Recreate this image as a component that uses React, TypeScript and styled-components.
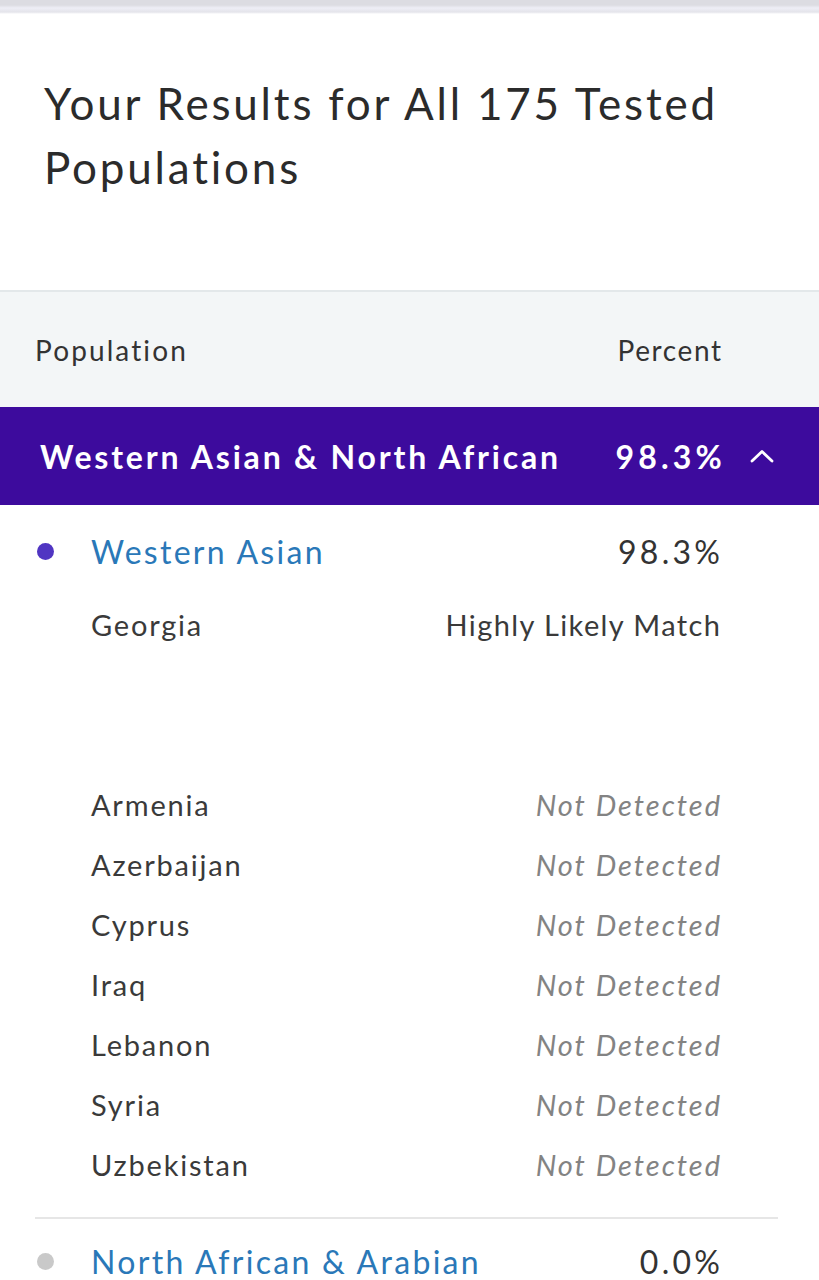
import React from 'react';
import styled, { createGlobalStyle } from 'styled-components';

const GlobalStyle = createGlobalStyle`
  html, body {
    margin: 0;
    padding: 0;
    background: #fff;
    font-family: Lato, "Noto Sans", "Liberation Sans", sans-serif;
    color: #333;
  }
`;

type Country = {
  name: string,
  status: string
}

const countries: Country[] = [
  { name: 'Armenia', status: 'Not Detected' },
  { name: 'Azerbaijan', status: 'Not Detected' },
  { name: 'Cyprus', status: 'Not Detected' },
  { name: 'Iraq', status: 'Not Detected' },
  { name: 'Lebanon', status: 'Not Detected' },
  { name: 'Syria', status: 'Not Detected' },
  { name: 'Uzbekistan', status: 'Not Detected' },
];

const Page = styled.div`
  width: 819px;
  min-height: 1280px;
  overflow: hidden;
`;

const TopStrip = styled.div`
  height: 14px;
  background: linear-gradient(#dcdce2 0, #dcdce2 5px, #eeeef6 8px, #e4e4ea 12px, #fff 14px);
`;

const Title = styled.h1`
  margin: 0;
  padding: 57px 60px 0 44px;
  font-size: 44px;
  font-weight: 400;
  line-height: 64px;
  letter-spacing: 2.8px;
  color: #2b2b2b;
`;

const TableHead = styled.div`
  margin-top: 91px;
  height: 115px;
  display: flex;
  align-items: center;
  justify-content: space-between;
  padding: 0 98px 0 35px;
  background: #f3f6f7;
  border-top: 2px solid #e3e8ea;
  font-size: 28px;
  color: #333;
`;

const HeadLabel = styled.span<{ spacing: number, right?: boolean }>`
  letter-spacing: ${({ spacing }) => spacing}px;
  margin-right: ${({ spacing, right }) => right ? -spacing : 0}px;
`;

const GroupBar = styled.div`
  height: 98px;
  display: flex;
  align-items: center;
  padding: 0 43px 0 40px;
  background: #3d0b9d;
  color: #fff;
  font-size: 32px;
  font-weight: 700;
`;

const GroupName = styled.span`
  flex: 1;
  letter-spacing: 2.8px;
`;

const GroupPercent = styled.span`
  letter-spacing: 4.2px;
  margin-right: 22px;
`;

const Body = styled.div`
  margin: 0 41px 0 35px;
`;

const RegionRow = styled.div<{ top?: number }>`
  display: flex;
  align-items: center;
  height: 72px;
  margin-top: ${({ top }) => top ?? 0}px;
  padding-right: 58px;
  font-size: 32px;
`;

const Dot = styled.span<{ color: string }>`
  width: 17px;
  height: 17px;
  border-radius: 50%;
  background: ${({ color }) => color};
  margin: 0 37px 0 2px;
  flex-shrink: 0;
`;

const RegionName = styled.span`
  flex: 1;
  color: #2a78b8;
  letter-spacing: 2.3px;
`;

const RegionPercent = styled.span`
  color: #333;
  letter-spacing: 3.3px;
  margin-right: -3.3px;
`;

const SubRow = styled.div`
  display: flex;
  align-items: center;
  justify-content: space-between;
  height: 60px;
  padding: 0 58px 0 56px;
  font-size: 29px;
`;

const SubName = styled.span`
  color: #3a3a3a;
  letter-spacing: 1.8px;
`;

const SubStatus = styled.span<{ muted?: boolean }>`
  color: ${({ muted }) => muted ? '#838383' : '#3a3a3a'};
  font-style: ${({ muted }) => muted ? 'italic' : 'normal'};
  letter-spacing: ${({ muted }) => muted ? 2 : 1.4}px;
  margin-right: ${({ muted }) => muted ? -2 : -1.4}px;
`;

const Spacer = styled.div<{ h: number }>`
  height: ${({ h }) => h}px;
`;

const Divider = styled.div`
  height: 2px;
  margin-top: 23px;
  background: #e6e6e6;
`;

const Chevron = () => (
  <svg width="28" height="18" viewBox="0 0 28 18" fill="none">
    <path d="M4 14 L14 4.5 L24 14" stroke="#fff" strokeWidth="2.8" strokeLinecap="round" strokeLinejoin="round" />
  </svg>
);

const App: React.FC = () => {
  return (
    <Page>
      <GlobalStyle />
      <TopStrip />
      <Title>Your Results for All 175 Tested Populations</Title>
      <TableHead>
        <HeadLabel spacing={2.1}>Population</HeadLabel>
        <HeadLabel spacing={1.6} right>Percent</HeadLabel>
      </TableHead>
      <GroupBar>
        <GroupName>Western Asian &amp; North African</GroupName>
        <GroupPercent>98.3%</GroupPercent>
        <Chevron />
      </GroupBar>
      <Body>
        <RegionRow top={10}>
          <Dot color="#5035c2" />
          <RegionName>Western Asian</RegionName>
          <RegionPercent>98.3%</RegionPercent>
        </RegionRow>
        <Spacer h={7} />
        <SubRow>
          <SubName>Georgia</SubName>
          <SubStatus>Highly Likely Match</SubStatus>
        </SubRow>
        <Spacer h={120} />
        {countries.map(c => (
          <SubRow key={c.name}>
            <SubName>{c.name}</SubName>
            <SubStatus muted>{c.status}</SubStatus>
          </SubRow>
        ))}
        <Divider />
        <RegionRow top={6}>
          <Dot color="#c9c9c9" />
          <RegionName>North African &amp; Arabian</RegionName>
          <RegionPercent>0.0%</RegionPercent>
        </RegionRow>
      </Body>
    </Page>
  );
};

export default App;
